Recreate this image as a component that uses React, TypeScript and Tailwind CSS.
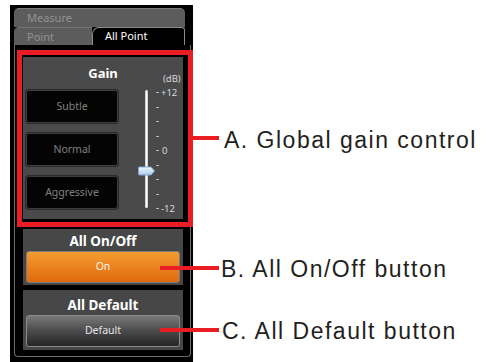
import React from "react";

const tickCount = 9;

function DarkButton({ label }: { label: string }) {
  return (
    <div className="h-[33px] w-[92px] rounded-[3px] border border-[#3d3d3d] bg-[#040404] shadow-[0_0_0_1px_#2a2a2a] flex items-center justify-center text-[10.5px] text-[#808080]">
      {label}
    </div>
  );
}

function GainSlider() {
  return (
    <div className="ml-[12px] -mt-[17px] flex flex-col text-[9.5px] leading-[10px] text-[#d8d8d8]">
      <span className="ml-[33px] h-[11px] leading-[11px]">(dB)</span>
      <div className="mt-[6px] flex h-[119px]">
        {/* track with thumb riding on it */}
        <div className="relative ml-[15px] h-[118px] w-[3px] rounded-[2px] bg-gradient-to-r from-[#bdbdbd] via-white to-[#c4c4c4]">
          <svg className="absolute -left-[7px] top-[76px]" width="18" height="10" viewBox="0 0 18 10">
            <defs>
              <linearGradient id="thumb" x1="0" y1="0" x2="0" y2="1">
                <stop offset="0" stopColor="#eef6fd" />
                <stop offset="1" stopColor="#a9cdec" />
              </linearGradient>
            </defs>
            <path d="M1.5 1 H13 L16.5 5 L13 9 H1.5 Q0.5 9 0.5 8 V2 Q0.5 1 1.5 1 Z" fill="url(#thumb)" stroke="#7fa8cc" strokeWidth="1" />
          </svg>
        </div>
        {/* tick marks */}
        <div className="ml-[8px] flex flex-col justify-between pt-[2px]">
          {Array.from({ length: tickCount }).map((_, i) => (
            <div key={i} className="h-[1px] w-[3px] bg-[#b8b8b8]" />
          ))}
        </div>
        {/* scale labels */}
        <div className="-mt-[2px] ml-[2px] flex h-[126px] flex-col justify-between">
          <span>+12</span>
          <span className="ml-[1px]">0</span>
          <span>-12</span>
        </div>
      </div>
    </div>
  );
}

export default function App() {
  return (
    <div className="relative w-[487px] h-[362px] overflow-hidden bg-white pl-[10px] pt-[5px] font-['Noto_Sans',sans-serif]">
      {/* device panel */}
      <div className="w-[183px] h-[360px] bg-black pl-[4px] pt-[3px]">
        <div className="h-[19px] w-[171px] rounded-t-[5px] border-t border-[#7a7a7a] bg-[#5c5c5c] pl-[13px] text-[11px] leading-[17px] text-[#939393]">
          Measure
        </div>
        <div className="flex h-[18px]">
          <div className="w-[78px] rounded-tl-[5px] border-t border-[#747474] bg-[#5c5c5c] pl-[13px] text-[11px] leading-[17px] text-[#939393]">
            Point
          </div>
          <div className="w-[93px] rounded-tl-[7px] rounded-tr-[3px] border border-b-0 border-[#8a8a8a] bg-black pl-[12px] text-[11px] leading-[16px] text-white">
            All Point
          </div>
        </div>

        <div className="h-[312px] w-[177px] rounded-b-[4px] border-x border-b border-[#6c6c6c] pl-[8px] pt-[12px]">
          {/* Gain */}
          <div className="h-[162px] w-[160px] bg-[#4a4a4a] pt-[8px]">
            <div className="text-center text-[13px] font-bold leading-[16px] text-white">Gain</div>
            <div className="mt-[9px] flex">
              <div className="ml-[3px] flex flex-col gap-[10px]">
                <DarkButton label="Subtle" />
                <DarkButton label="Normal" />
                <DarkButton label="Aggressive" />
              </div>
              <GainSlider />
            </div>
          </div>

          {/* All On/Off */}
          <div className="mt-[10px] h-[56px] w-[160px] bg-[#474747] pt-[3px]">
            <div className="text-center text-[13.5px] font-bold leading-[18px] text-white">All On/Off</div>
            <div className="ml-[3px] mt-[1px] flex h-[32px] w-[154px] items-center justify-center rounded-[3px] border border-[#7c7c7c] bg-gradient-to-b from-[#f39c30] to-[#e0690c] text-[10.5px] text-[#fff3e6]">
              On
            </div>
          </div>

          {/* All Default */}
          <div className="mt-[5px] h-[60px] w-[160px] bg-[#474747] pt-[6px]">
            <div className="text-center text-[13.5px] font-bold leading-[19px] text-white">All Default</div>
            <div className="ml-[3px] flex h-[32px] w-[154px] items-center justify-center rounded-[3px] border border-[#8a8a8a] bg-gradient-to-b from-[#7a7a7a] via-[#4a4a4a] to-[#262626] text-[10.5px] text-[#e4e4e4]">
              Default
            </div>
          </div>
        </div>
      </div>

      {/* callouts drawn over the screenshot */}
      <div className="absolute left-[17px] top-[50px] h-[177px] w-[176px] border-[5px] border-[#ea1d25]" />
      <div className="absolute left-[193px] top-[136px] h-[4px] w-[26px] bg-[#ea1d25]" />
      <div className="absolute left-[160px] top-[266px] h-[4px] w-[59px] bg-[#ea1d25]" />
      <div className="absolute left-[160px] top-[328px] h-[4px] w-[59px] bg-[#ea1d25]" />
      <div className="absolute left-[224px] top-[129px] whitespace-nowrap font-['Liberation_Sans',sans-serif] text-[23px] leading-none tracking-[1.5px] text-[#231f20]">
        A. Global gain control
      </div>
      <div className="absolute left-[221px] top-[258px] whitespace-nowrap font-['Liberation_Sans',sans-serif] text-[23px] leading-none tracking-[1.5px] text-[#231f20]">
        B. All On/Off button
      </div>
      <div className="absolute left-[222px] top-[320px] whitespace-nowrap font-['Liberation_Sans',sans-serif] text-[23px] leading-none tracking-[1.5px] text-[#231f20]">
        C. All Default button
      </div>
    </div>
  );
}
